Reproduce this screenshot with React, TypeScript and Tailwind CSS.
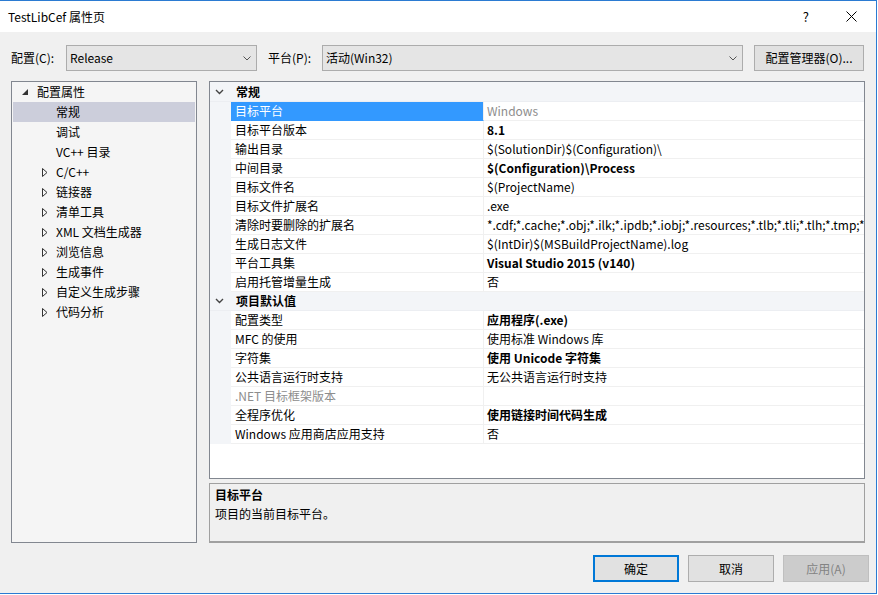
import { useState } from "react";

type Prop = { name: string; value: string; bold?: boolean; grayName?: boolean; grayValue?: boolean };

const general: Prop[] = [
  { name: "目标平台", value: "Windows", grayValue: true },
  { name: "目标平台版本", value: "8.1", bold: true },
  { name: "输出目录", value: "$(SolutionDir)$(Configuration)\\" },
  { name: "中间目录", value: "$(Configuration)\\Process", bold: true },
  { name: "目标文件名", value: "$(ProjectName)" },
  { name: "目标文件扩展名", value: ".exe" },
  {
    name: "清除时要删除的扩展名",
    value:
      "*.cdf;*.cache;*.obj;*.ilk;*.ipdb;*.iobj;*.resources;*.tlb;*.tli;*.tlh;*.tmp;*.rsp;*.pgc;*.pgd;*.meta;*.tlog;*.manifest;*.res;*.pch;*.exp;*.idb;*.rep;*.xdc;*.pdb;*_manifest.rc;*.bsc;*.sbr;*.xml;*.metagen;*.bi",
  },
  { name: "生成日志文件", value: "$(IntDir)$(MSBuildProjectName).log" },
  { name: "平台工具集", value: "Visual Studio 2015 (v140)", bold: true },
  { name: "启用托管增量生成", value: "否" },
];

const defaults: Prop[] = [
  { name: "配置类型", value: "应用程序(.exe)", bold: true },
  { name: "MFC 的使用", value: "使用标准 Windows 库" },
  { name: "字符集", value: "使用 Unicode 字符集", bold: true },
  { name: "公共语言运行时支持", value: "无公共语言运行时支持" },
  { name: ".NET 目标框架版本", value: "", grayName: true },
  { name: "全程序优化", value: "使用链接时间代码生成", bold: true },
  { name: "Windows 应用商店应用支持", value: "否" },
];

const children = [
  { label: "常规", expandable: false },
  { label: "调试", expandable: false },
  { label: "VC++ 目录", expandable: false },
  { label: "C/C++", expandable: true },
  { label: "链接器", expandable: true },
  { label: "清单工具", expandable: true },
  { label: "XML 文档生成器", expandable: true },
  { label: "浏览信息", expandable: true },
  { label: "生成事件", expandable: true },
  { label: "自定义生成步骤", expandable: true },
  { label: "代码分析", expandable: true },
];

function Chevron({ color = "#555" }: { color?: string }) {
  return (
    <svg width="8" height="5" viewBox="0 0 8 5">
      <polyline points="0.5,0.5 4,4 7.5,0.5" fill="none" stroke={color} strokeWidth="1" />
    </svg>
  );
}

function Combo({ text, width }: { text: string; width: string }) {
  return (
    <div className={`${width} h-[26px] flex items-center bg-[#e5e5e5] border border-[#acacac] pl-[3px] pr-[5px]`}>
      <span className="flex-1">{text}</span>
      <Chevron />
    </div>
  );
}

function CategoryRow({ title, first }: { title: string; first?: boolean }) {
  return (
    <div className={`flex ${first ? "h-[20px]" : "h-[19px]"} bg-[#f3f5f8] border-b border-[#eceef2]`}>
      <div className="w-[21px] flex items-center pl-[5px]">
        <svg width="9" height="6" viewBox="0 0 9 6">
          <polyline points="1,1 4.5,4.5 8,1" fill="none" stroke="#444" strokeWidth="1.4" />
        </svg>
      </div>
      <div className="flex-1 flex items-center pl-[5px] font-bold">{title}</div>
    </div>
  );
}

function PropRow({ p, selected }: { p: Prop; selected?: boolean }) {
  return (
    <div className="flex h-[19px]">
      <div className="w-[21px] bg-[#f3f5f8]" />
      <div
        className={`w-[253px] flex items-center pl-[4px] border-r border-b whitespace-nowrap overflow-hidden ${
          selected ? "bg-[#3399ff] text-white border-r-[#f0f0f0] border-b-[#3399ff]" : "border-[#f0f0f0]"
        } ${p.grayName ? "text-[#8d8d8d]" : ""}`}
      >
        {p.name}
      </div>
      <div
        className={`flex-1 flex items-center pl-[3px] border-b border-[#f0f0f0] whitespace-nowrap overflow-hidden ${
          p.bold ? "font-bold" : ""
        } ${p.grayValue ? "text-[#8d8d8d]" : ""}`}
      >
        {p.value}
      </div>
    </div>
  );
}

function DialogButton({ label, kind }: { label: string; kind: "default" | "normal" | "disabled" }) {
  const cls =
    kind === "default"
      ? "border-2 border-[#0078d7] bg-[#e1e1e1]"
      : kind === "disabled"
      ? "border border-[#bfbfbf] bg-[#cccccc] text-[#838383]"
      : "border border-[#adadad] bg-[#e1e1e1]";
  return <div className={`w-[86px] h-[27px] flex items-center justify-center ${cls}`}>{label}</div>;
}

export default function App() {
  const [selected, setSelected] = useState("常规");

  return (
    <div className="w-[878px] h-[595px] bg-white text-[12px] leading-none text-black font-['Noto_Sans_CJK_SC',sans-serif]">
      <div className="w-[877px] h-[594px] border-t border-r border-b border-[#2b7bd2] bg-[#f0f0f0] flex flex-col">
        {/* title bar */}
        <div className="h-[31px] bg-white flex items-center pl-[8px] pr-[19px]">
          <span>TestLibCef 属性页</span>
          <span className="ml-auto text-[13px]">?</span>
          <svg className="ml-[37px]" width="11" height="11" viewBox="0 0 11 11">
            <path d="M0.5 0.5 L10.5 10.5 M10.5 0.5 L0.5 10.5" stroke="#000" strokeWidth="1" />
          </svg>
        </div>

        {/* configuration bar */}
        <div className="mt-[13px] h-[26px] flex items-center pl-[11px]">
          <span className="w-[55px]">配置(C):</span>
          <Combo text="Release" width="w-[191px]" />
          <span className="ml-[11px] w-[54px]">平台(P):</span>
          <Combo text="活动(Win32)" width="w-[421px]" />
          <div className="ml-[11px] w-[110px] h-[26px] flex items-center justify-center bg-[#e1e1e1] border border-[#adadad]">
            配置管理器(O)...
          </div>
        </div>

        {/* main */}
        <div className="mt-[10px] h-[462px] flex pl-[11px] gap-[12px]">
          <div className="w-[186px] h-full border border-[#828790] bg-[#f5f5f5] flex flex-col">
            <div className="h-[20px] flex items-center pl-[10px]">
              <div className="w-[15px]">
                <svg width="6" height="6" viewBox="0 0 6 6">
                  <polygon points="6,0 6,6 0,6" fill="#333" />
                </svg>
              </div>
              <span>配置属性</span>
            </div>
            {children.map((c) => (
              <div
                key={c.label}
                onClick={() => setSelected(c.label)}
                className={`h-[20px] mx-px flex items-center pl-[29px] ${selected === c.label ? "bg-[#cccedb]" : ""}`}
              >
                <div className="w-[14px]">
                  {c.expandable && (
                    <svg width="6" height="9" viewBox="0 0 6 9">
                      <polygon points="0.5,0.5 5,4.5 0.5,8.5" fill="none" stroke="#333" strokeWidth="1" />
                    </svg>
                  )}
                </div>
                <span>{c.label}</span>
              </div>
            ))}
          </div>

          <div className="w-[656px] flex flex-col gap-[4px]">
            <div className="h-[398px] border border-[#828790] bg-white flex flex-col overflow-hidden">
              <CategoryRow title="常规" first />
              {general.map((p, i) => (
                <PropRow key={p.name} p={p} selected={i === 0} />
              ))}
              <CategoryRow title="项目默认值" />
              {defaults.map((p) => (
                <PropRow key={p.name} p={p} />
              ))}
            </div>
            <div className="flex-1 border border-[#a0a0a0] border-b-2 bg-[#f0f0f0] pl-[5px] pt-[5px] flex flex-col gap-[7px]">
              <span className="font-bold">目标平台</span>
              <span>项目的当前目标平台。</span>
            </div>
          </div>
        </div>

        {/* dialog buttons */}
        <div className="mt-[12px] flex justify-end gap-[9px] pr-[7px]">
          <DialogButton label="确定" kind="default" />
          <DialogButton label="取消" kind="normal" />
          <DialogButton label="应用(A)" kind="disabled" />
        </div>
      </div>
    </div>
  );
}
